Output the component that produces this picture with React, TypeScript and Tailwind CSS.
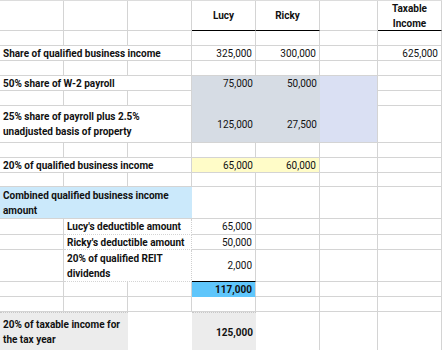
import React from 'react';

const GL = 'border-r border-b border-[#d4d4d4]';

function C({ b = GL, s = '', children }: { b?: string; s?: string; children?: React.ReactNode }) {
  return <div className={`${b} ${s} flex items-center min-w-0 whitespace-nowrap`}>{children}</div>;
}

const L = 'col-span-3 pl-[3px] font-bold';
const V = 'justify-end pr-[3px]';

function E() {
  return <C />;
}

function Empty7() {
  return (
    <>
      <E /><E /><E /><E /><E /><E /><E />
    </>
  );
}

export default function App() {
  return (
    <div className="w-[443px] h-[350px] bg-white overflow-hidden" style={{ fontFamily: 'Roboto, "Open Sans", sans-serif' }}>
      <div
        className="grid w-[442px] grid-cols-[64px_64px_64px_64px_64px_58px_64px] grid-rows-[30px_15px_15px_15px_15px_15px_37px_15px_15px_14px_32px_16px_15px_32px_15px_15px_39px] text-[10px] leading-[15px] text-[#111] border-t border-[#dcdcdc]"
      >
        {/* R1 */}
        <E /><E /><E />
        <C b="border-r border-[#d4d4d4] border-b border-b-black" s="justify-center font-bold">Lucy</C>
        <C b="border-r border-[#d4d4d4] border-b border-b-black" s="justify-center font-bold">Ricky</C>
        <E />
        <C b="border-r border-[#d4d4d4] border-b border-b-black" s="justify-center font-bold text-center whitespace-normal">
          <span>Taxable<br />Income</span>
        </C>

        {/* R2 */}
        <Empty7 />

        {/* R3 */}
        <C s={L}>Share of qualified business income</C>
        <C s={V}>325,000</C>
        <C s={V}>300,000</C>
        <E />
        <C s={V}>625,000</C>

        {/* R4 */}
        <Empty7 />

        {/* R5 */}
        <C s={L}>50% share of W-2 payroll</C>
        <C b="bg-[#d6dce4]" s={V}>75,000</C>
        <C b="bg-[#d6dce4]" s={V}>50,000</C>
        <C b="bg-[#dae0f3] border-r border-r-[#d4d4d4]" />
        <E />

        {/* R6 */}
        <E /><E /><E />
        <C b="bg-[#d6dce4]" />
        <C b="bg-[#d6dce4]" />
        <C b="bg-[#dae0f3] border-r border-r-[#d4d4d4]" />
        <E />

        {/* R7 */}
        <C s={`${L} whitespace-normal`}>
          <span>25% share of payroll plus 2.5%<br />unadjusted basis of property</span>
        </C>
        <C b="bg-[#d6dce4] border-b border-b-[#d4d4d4]" s={V}>125,000</C>
        <C b="bg-[#d6dce4] border-b border-b-[#d4d4d4]" s={V}>27,500</C>
        <C b="bg-[#dae0f3] border-r border-r-[#d4d4d4] border-b border-b-[#d4d4d4]" />
        <E />

        {/* R8 */}
        <Empty7 />

        {/* R9 */}
        <C s={L}>20% of qualified business income</C>
        <C b="bg-[#fffcc8] border-b border-b-[#d4d4d4]" s={V}>65,000</C>
        <C b="bg-[#fffcc8] border-b border-r border-[#d4d4d4]" s={V}>60,000</C>
        <E />
        <E />

        {/* R10 */}
        <Empty7 />

        {/* R11 */}
        <C b="bg-[#cbe9fb] border-b border-b-[#d4d4d4]" s="col-span-3 pl-[3px] font-bold whitespace-normal">
          <span>Combined qualified business income<br />amount</span>
        </C>
        <E /><E /><E /><E />

        {/* R12 */}
        <E />
        <C b="border-b border-b-[#d4d4d4] border-r border-dotted border-r-[#cfcfcf]" s="col-span-2 pl-[3px] font-bold">Lucy's deductible amount</C>
        <C s={V}>65,000</C>
        <E /><E /><E />

        {/* R13 */}
        <E />
        <C b="border-b border-b-[#d4d4d4] border-r border-dotted border-r-[#cfcfcf]" s="col-span-2 pl-[3px] font-bold">Ricky's deductible amount</C>
        <C s={V}>50,000</C>
        <E /><E /><E />

        {/* R14 */}
        <E />
        <C b="border-b border-b-[#d4d4d4] border-r border-dotted border-r-[#cfcfcf]" s="col-span-2 pl-[3px] font-bold whitespace-normal">
          <span>20% of qualified REIT<br />dividends</span>
        </C>
        <C b="border-r border-r-[#d4d4d4] border-b border-b-black" s={V}>2,000</C>
        <E /><E /><E />

        {/* R15 */}
        <E /><E /><E />
        <C b="bg-[#5fc6fb] border-r border-r-[#d4d4d4] border-b border-b-[#5fc6fb]" s={`${V} font-bold`}>117,000</C>
        <E /><E /><E />

        {/* R16 */}
        <Empty7 />

        {/* R17 */}
        <C b="bg-[#ececec] border-t border-dotted border-t-[#c8c8c8]" s="col-span-2 pl-[3px] font-bold whitespace-normal">
          <span>20% of taxable income for<br />the tax year</span>
        </C>
        <C b="bg-white" />
        <C b="bg-[#ececec] border-t border-dotted border-t-[#c8c8c8]" s={`${V} font-bold`}>125,000</C>
        <E /><E /><E />
      </div>
    </div>
  );
}
